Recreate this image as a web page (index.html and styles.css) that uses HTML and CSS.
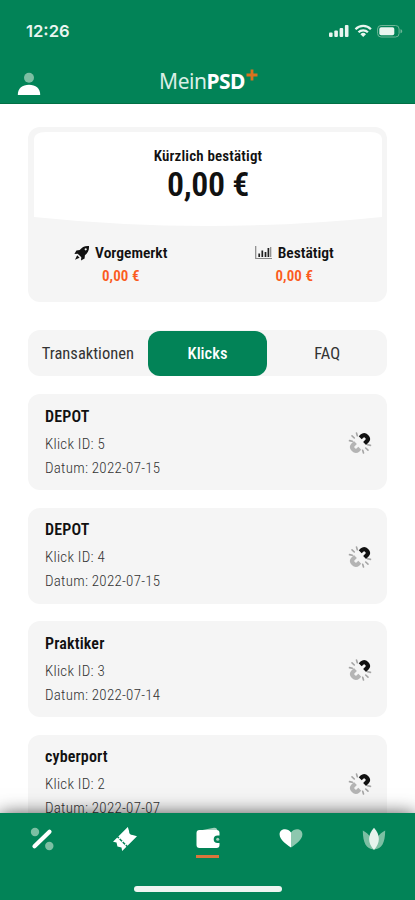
FILE: index.html
```html
<!DOCTYPE html>
<html lang="de">
<head>
<meta charset="utf-8">
<meta name="viewport" content="width=device-width, initial-scale=1">
<title>MeinPSD+</title>
<link rel="stylesheet" href="styles.css">
</head>
<body>
<svg class="defs" width="0" height="0" aria-hidden="true">
  <symbol id="link" viewBox="0 0 24 24">
    <g fill="none" stroke-width="4.200">
      <path d="M12.200 6.800 13.800 5.200Q16.300 3 18.700 5.400T19 10.100L16.600 12.400" stroke="#111"/>
      <path d="M11.800 17.200 10.200 18.800Q7.700 21 5.300 18.600T5 13.900L7.400 11.600" stroke="#b4b4b4"/>
    </g>
    <path d="M8.500 2l.8 2.800M4 4.800l2.300 2.200M1.500 9.600l2.800.6M15.500 22l-.8-2.800M20 19.200l-2.300-2.200M22.500 14.400l-2.800-.6" stroke="#a5a5a5" stroke-width="1.600" stroke-linecap="round"/>
  </symbol>
</svg>
<div class="app">
  <header class="top">
    <div class="status">
      <span class="time">12:26</span>
      <svg width="74" height="16" viewBox="0 0 74 16" fill="#e9f5ef">
        <rect x="0" y="9.500" width="3.600" height="4.500" rx="1"/><rect x="5.300" y="7.500" width="3.600" height="6.500" rx="1"/><rect x="10.600" y="5" width="3.600" height="9" rx="1"/><rect x="15.900" y="2" width="3.600" height="12" rx="1"/>
        <g fill="none" stroke="#e9f5ef" stroke-width="2.300"><path d="M26.500 6.200a10.800 10.800 0 0 1 15.400 0M29.500 9.300a6.600 6.600 0 0 1 9.400 0"/></g>
        <path d="M31.400 11.200a4 4 0 0 1 5.600 0L34.200 14z"/>
        <rect x="48.600" y="2.500" width="21.500" height="11.500" rx="3.500" fill="none" stroke="#6eb697"/>
        <rect x="50.300" y="4.200" width="15" height="8.100" rx="1.800"/>
        <path d="M71.500 6.200c2.300.8 2.300 3.200 0 4z" fill="#6eb697"/>
      </svg>
    </div>
    <div class="brandbar">
      <svg class="user" width="24" height="24" viewBox="0 0 24 24"><circle cx="12" cy="5.700" r="5" fill="#7cbfa3"/><path d="M.8 23c0-7 4.500-10.300 11.200-10.300S23.200 16 23.200 23z" fill="#fff"/></svg>
      <div class="brand"><span>Mein</span><b>PSD</b><svg class="plus" width="12" height="12" viewBox="0 0 12 12"><path d="M6 .5v11M.5 6h11" stroke="#d9721f" stroke-width="2.800"/></svg></div>
    </div>
  </header>

  <main>
    <section class="summary">
      <div class="hero">
        <svg class="curve" width="348" height="96" viewBox="0 0 348 96"><path d="M12 0H336Q348 0 348 8V85Q174 103 0 85V8Q0 0 12 0Z" fill="#fff"/></svg>
        <div class="hero-text"><h2>Kürzlich bestätigt</h2><p>0,00 €</p></div>
      </div>
      <div class="stats">
        <div class="stat">
          <h3><svg width="16" height="16" viewBox="0 0 16 16"><path d="M15 1C10.500.7 7.800 2.300 5.700 5.100L2.400 5.400.4 9l3.300-.3L7.300 12.300 7 15.600l3.600-2 .3-3.300C13.700 8.200 15.300 5.500 15 1z" fill="#111"/><path d="M3.200 10.300 1 14.800l4.600-2.100z" fill="#111"/><circle cx="11.700" cy="4.300" r="1.100" fill="#f5f5f5"/></svg>Vorgemerkt</h3>
          <p>0,00 €</p>
        </div>
        <div class="stat">
          <h3 class="wide"><svg width="17" height="14" viewBox="0 0 17 14"><path d="M.7 0v12.500H17M15.700 1v10" fill="none" stroke="#888" stroke-width="1.200"/><path d="M4.200 7.500V11M7.300 4.500V11M10.500 6V11M13.400 2V11" stroke="#222" stroke-width="1.700"/></svg>Bestätigt</h3>
          <p>0,00 €</p>
        </div>
      </div>
    </section>

    <nav class="tabs"><a>Transaktionen</a><a class="active">Klicks</a><a>FAQ</a></nav>

    <article class="click"><div><h4>DEPOT</h4><p>Klick ID: 5</p><p>Datum: 2022-07-15</p></div><svg width="24" height="24"><use href="#link"/></svg></article>
    <article class="click"><div><h4>DEPOT</h4><p>Klick ID: 4</p><p>Datum: 2022-07-15</p></div><svg width="24" height="24"><use href="#link"/></svg></article>
    <article class="click"><div><h4>Praktiker</h4><p>Klick ID: 3</p><p>Datum: 2022-07-14</p></div><svg width="24" height="24"><use href="#link"/></svg></article>
    <article class="click"><div><h4>cyberport</h4><p>Klick ID: 2</p><p>Datum: 2022-07-07</p></div><svg width="24" height="24"><use href="#link"/></svg></article>
  </main>

  <footer class="bottom">
    <div class="icons">
      <a><svg width="24" height="24" viewBox="0 0 24 24"><g fill="#7cbfa3"><circle cx="5" cy="5" r="4.200"/><circle cx="19.300" cy="19" r="4.200"/></g><path d="M4.500 19.200 19.500 4.700" stroke="#fff" stroke-width="4.200" stroke-linecap="round"/></svg></a>
      <a><svg width="24" height="24" viewBox="0 0 24 24"><g transform="rotate(-45 12 12)" fill="#fff"><path d="M1.500 5.500H7.500V18.500H1.500L3.500 15.500 1.300 12 3.500 8.500z"/><path d="M9 5.500H22.500L20.300 9.500a3.500 3.500 0 0 0 0 5L22.500 18.500H9z"/><path d="M8.200 7v10" stroke="#fff" stroke-width="1.800" stroke-dasharray="1.200 3.200"/></g></svg></a>
      <a class="current"><svg width="24" height="24" viewBox="0 0 24 24"><path d="M4 3.500 18 .8Q21 .4 21.500 4z" fill="#a5d1be"/><path d="M3.500 3H20.500Q23.500 3 23.500 6V8.500H21.500a3.800 3.800 0 0 0 0 7.600h2V18q0 3-3 3H3.500q-3 0-3-3V6q0-3 3-3z" fill="#fff"/><circle cx="21.700" cy="12.300" r="1.500" fill="#a5d1be"/></svg></a>
      <a><svg width="24" height="24" viewBox="0 0 24 24"><path d="M12 20.500C7 17 .8 13 .6 7.500.5 1.500 8.500.3 12 5.500z" fill="#fff"/><path d="M12 20.500c5-3.500 11.200-7.500 11.400-13C23.500 1.500 15.500.3 12 5.500z" fill="#8dc7ae"/></svg></a>
      <a><svg width="24" height="24" viewBox="0 0 24 24"><path d="M.8 3.500C8 7 10 12 12 22.500 4 22 1 16 .8 3.500zM23.200 3.500C16 7 14 12 12 22.500 20 22 23 16 23.200 3.500z" fill="#7cbfa3"/><path d="M12 .8C5.500 8 5.500 16 12 23c6.500-7 6.500-15 0-22.200z" fill="#e6f3ed"/></svg></a>
    </div>
    <div class="home"></div>
  </footer>
</div>
</body>
</html>
```

FILE: styles.css
```css
* { box-sizing: border-box; margin: 0; }
body { background: #fff; font-family: "Roboto Condensed", Roboto, sans-serif; font-stretch: 75%; color: #111; }
.defs { position: absolute; }
.app { width: 415px; height: 900px; overflow: hidden; display: flex; flex-direction: column; }

.top { height: 104px; flex: none; background: #028357; border-bottom: 1px solid #017045; }
.status { display: flex; justify-content: space-between; padding: 23px 12px 0 26px; height: 62px; }
.time { font: 600 16.600px/17px Inter, sans-serif; color: #eaf5f0; }
.brandbar { display: grid; grid-template-columns: 1fr auto 1fr; padding: 0 17px; height: 42px; }
.user { margin-top: 10px; }
.brand { display: flex; font: 21px/39px "Noto Sans", sans-serif; font-stretch: 100%; letter-spacing: -.5px; color: #fff; }
.brand span { color: #d9eee5; }
.plus { margin: 7px -2px 0 1px; }

main { flex: 1; min-height: 0; overflow: hidden; padding: 23px 28px 0; }
.summary { height: 175px; border-radius: 12px; background: #f5f5f5; padding: 5px 6px; }
.hero { display: grid; height: 96px; }
.hero > * { grid-area: 1 / 1; }
.hero-text { text-align: center; padding-top: 15px; z-index: 1; }
h2 { font-size: 15px; line-height: 19px; font-weight: 600; letter-spacing: .17px; }
.hero-text p { font-size: 34px; line-height: 37px; font-weight: 600; letter-spacing: -.4px; }
.stats { display: grid; grid-template-columns: 1fr 1fr; text-align: center; padding-top: 14px; }
h3 { display: flex; justify-content: center; align-items: center; gap: 5px; font-size: 15.500px; line-height: 22px; font-weight: 600; }
h3.wide { gap: 6px; }
.stat p { font-size: 15px; line-height: 25px; font-weight: 600; color: #fb5b20; letter-spacing: .1px; }

.tabs { display: grid; grid-template-columns: repeat(3, 1fr); margin: 28px 0 18px; height: 46px; border-radius: 12px; background: #f5f5f5; text-align: center; font-size: 16.500px; line-height: 47px; color: #333; }
.tabs .active { background: #028357; color: #fff; border-radius: 12px; font-weight: 500; margin: 1px 0; line-height: 45px; }

.click { display: flex; justify-content: space-between; align-items: center; height: 96px; margin-bottom: 17.500px; border-radius: 12px; background: #f5f5f5; padding: 0 15px 0 17px; }
h4 { font-size: 16px; line-height: 24px; font-weight: 600; letter-spacing: .15px; }
.click p { font-size: 15px; line-height: 24px; font-weight: 350; letter-spacing: .25px; color: #333; }
.click h4 + p { margin-top: 3px; }
.click svg { margin-top: 2px; }

.bottom { height: 87px; flex: none; background: #028357; position: relative; box-shadow: 0 2px 18px 0 rgba(0,0,0,.8); }
.icons { display: grid; grid-template-columns: repeat(5, 1fr); padding-top: 14px; height: 73px; }
.icons a { display: flex; flex-direction: column; align-items: center; }
.current::after { content: ""; width: 23px; height: 3px; margin-top: 4px; background: #d9753c; }
.home { width: 148px; height: 6px; border-radius: 3px; margin: 0 auto; background: #eef5f1; }
```
